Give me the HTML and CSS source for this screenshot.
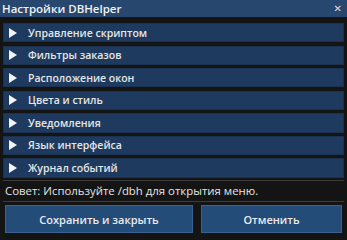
FILE: index.html
```html
<!DOCTYPE html>
<html lang="ru">
<head>
    <meta charset="UTF-8">
    <title>Настройки DBHelper</title>
    <link rel="stylesheet" href="styles.css">
</head>
<body>

    <div class="window">
        <div class="titlebar">
            <span class="title">Настройки DBHelper</span>
            <span class="close">&#x2715;</span>
        </div>

        <div class="sections">
            <div class="section"><span class="arrow"></span>Управление скриптом</div>
            <div class="section"><span class="arrow"></span>Фильтры заказов</div>
            <div class="section"><span class="arrow"></span>Расположение окон</div>
            <div class="section"><span class="arrow"></span>Цвета и стиль</div>
            <div class="section"><span class="arrow"></span>Уведомления</div>
            <div class="section"><span class="arrow"></span>Язык интерфейса</div>
            <div class="section"><span class="arrow"></span>Журнал событий</div>
        </div>

        <div class="tip">Совет: Используйте /dbh для открытия меню.</div>

        <div class="actions">
            <button class="btn btn-save">Сохранить и закрыть</button>
            <button class="btn btn-cancel">Отменить</button>
        </div>
    </div>

</body>
</html>
```

FILE: styles.css
```css
body {
    margin: 0;
    background: #121212;
    font-family: "Open Sans", sans-serif;
    color: #ececec;
}
.window {
    width: 347px;
    height: 240px;
    background: #141414;
    overflow: hidden;
}
.titlebar {
    height: 17px;
    background: #27476f;
    display: flex;
    align-items: center;
    justify-content: space-between;
    padding: 0 5px 0 2px;
}
.title {
    font-size: 11.5px;
    font-weight: 600;
    color: #f2f2f2;
}
.close {
    font-family: "DejaVu Sans", sans-serif;
    font-size: 10px;
    font-weight: bold;
    color: #dcdcdc;
}
.sections {
    padding: 6px 3px 0 3px;
}
.section {
    height: 17.2px;
    margin-bottom: 3.4px;
    background: #1e3b5f;
    border: 1px solid #1a3250;
    display: flex;
    align-items: center;
    font-size: 10.5px;
    font-weight: 600;
    color: #e6e6e6;
}
.arrow {
    width: 0;
    height: 0;
    border-top: 5px solid transparent;
    border-bottom: 5px solid transparent;
    border-left: 8px solid #f4f4f4;
    margin: 0 11px 0 5px;
}
.tip {
    margin: -0.6px 3px 0 3px;
    border-top: 1px solid #3a3a3a;
    border-bottom: 1px solid #3a3a3a;
    height: 20px;
    line-height: 20px;
    padding-left: 2px;
    font-size: 11.4px;
    color: #e4e4e4;
}
.actions {
    display: flex;
    gap: 8px;
    padding: 3px 5px 0 5px;
}
.btn {
    height: 28px;
    background: #244c79;
    border: 1px solid #3a6291;
    color: #eaeaea;
    font-family: "Open Sans", sans-serif;
    font-size: 11px;
    font-weight: 600;
    cursor: pointer;
}
.btn-save {
    width: 188px;
}
.btn-cancel {
    width: 141px;
}
```
